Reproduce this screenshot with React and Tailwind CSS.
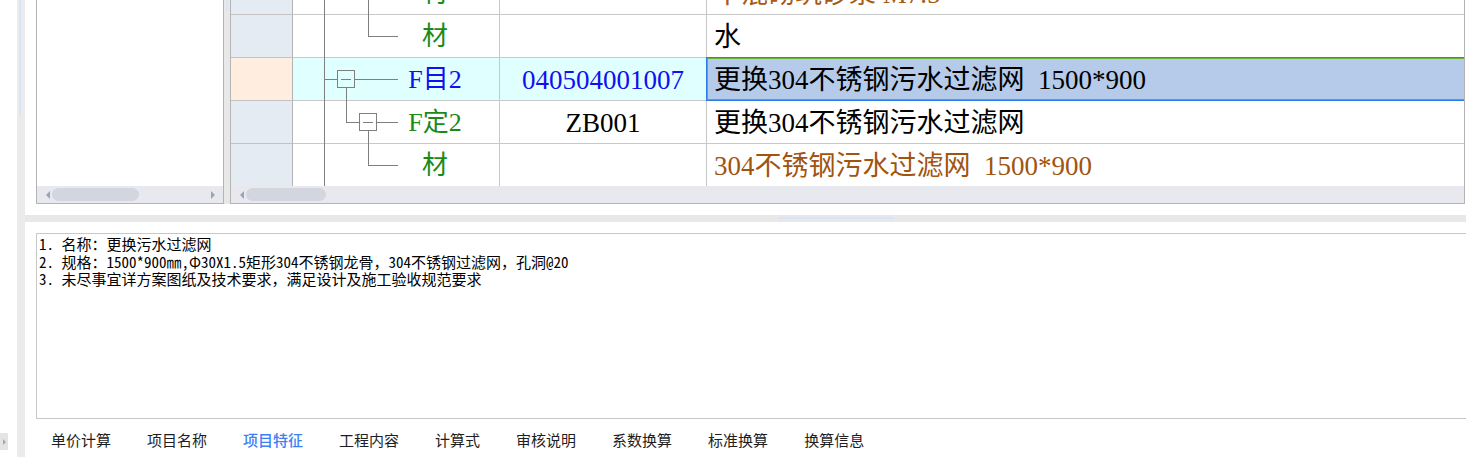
import React from 'react';

const gridFont = { fontFamily: '"Liberation Serif", "Noto Sans CJK SC", serif' };
const uiFont = { fontFamily: '"Noto Sans CJK SC", "Liberation Sans", sans-serif' };
const memoFont = { fontFamily: '"Noto Sans Mono CJK SC", "Noto Sans CJK SC", monospace' };

const rows = [
  { id: 'r0', kind: 'top', tree: '材', treeColor: 'text-[#1a8a1a]', code: '', name: '干混砌筑砂浆 M7.5', nameColor: 'text-[#a65a16]' },
  { id: 'r1', kind: 'leaf1', tree: '材', treeColor: 'text-[#1a8a1a]', code: '', name: '水', nameColor: 'text-black' },
  { id: 'r2', kind: 'mu', tree: 'F目2', treeColor: 'text-[#1010f0]', code: '040504001007', codeColor: 'text-[#1010f0]', name: '更换304不锈钢污水过滤网  1500*900', nameColor: 'text-black', active: true },
  { id: 'r3', kind: 'ding', tree: 'F定2', treeColor: 'text-[#1a8a1a]', code: 'ZB001', codeColor: 'text-black', name: '更换304不锈钢污水过滤网', nameColor: 'text-black' },
  { id: 'r4', kind: 'leaf2', tree: '材', treeColor: 'text-[#1a8a1a]', code: '', name: '304不锈钢污水过滤网  1500*900', nameColor: 'text-[#a0540f]' },
];

const tabs = ['单价计算', '项目名称', '项目特征', '工程内容', '计算式', '审核说明', '系数换算', '标准换算', '换算信息'];

function TreeLines({ kind }) {
  const c = '#7f7f7f';
  return (
    <svg className="absolute left-0 top-0 overflow-visible" width="207" height="43" viewBox="0 0 207 43">
      <g stroke={c} strokeWidth="1" fill="none" shapeRendering="crispEdges">
        <line x1="31.5" y1="0" x2="31.5" y2="43" />
        {kind === 'top' && <line x1="75.5" y1="0" x2="75.5" y2="43" />}
        {(kind === 'leaf1' || kind === 'leaf2') && (
          <>
            <line x1="75.5" y1="0" x2="75.5" y2="21.5" />
            <line x1="75.5" y1="21.5" x2="105" y2="21.5" />
          </>
        )}
        {kind === 'mu' && (
          <>
            <line x1="31.5" y1="21.5" x2="44" y2="21.5" />
            <rect x="44.5" y="12.5" width="17" height="17" />
            <line x1="48" y1="21.5" x2="58" y2="21.5" />
            <line x1="62" y1="21.5" x2="105" y2="21.5" />
            <line x1="53.5" y1="30" x2="53.5" y2="43" />
          </>
        )}
        {kind === 'ding' && (
          <>
            <line x1="53.5" y1="0" x2="53.5" y2="21.5" />
            <line x1="53.5" y1="21.5" x2="66" y2="21.5" />
            <rect x="66.5" y="12.5" width="17" height="17" />
            <line x1="70" y1="21.5" x2="80" y2="21.5" />
            <line x1="84" y1="21.5" x2="105" y2="21.5" />
            <line x1="75.5" y1="30" x2="75.5" y2="43" />
          </>
        )}
      </g>
    </svg>
  );
}

function HScroll({ thumbWidth, rightArrow }) {
  return (
    <div className="h-[17px] bg-[#e8e9ee] flex items-center">
      <div className="ml-[9px] w-0 h-0 border-y-[4px] border-y-transparent border-r-[4px] border-r-[#9ba4b7]" />
      <div className="ml-[2px] h-[13px] rounded-full bg-[#d3d6de]" style={{ width: thumbWidth }} />
      {rightArrow && (
        <div className="ml-auto mr-[8px] w-0 h-0 border-y-[4px] border-y-transparent border-l-[4px] border-l-[#9ba4b7]" />
      )}
    </div>
  );
}

function GridRow({ r }) {
  const cellBg = r.active ? 'bg-[#e0ffff]' : 'bg-white';
  return (
    <div className="flex h-[43px]">
      <div className={`w-[62px] shrink-0 border-r border-b border-r-[#b3b3b3] border-b-[#c3c3c3] ${r.active ? 'bg-[#ffeedf]' : 'bg-[#e4ebf3]'}`} />
      <div className={`relative w-[207px] shrink-0 border-r border-b border-[#c8c8c8] flex items-center pt-[2px] ${cellBg}`}>
        <TreeLines kind={r.kind} />
        <span className={`ml-[105px] w-[74px] text-center text-[26px] leading-none ${r.treeColor}`}>{r.tree}</span>
      </div>
      <div className={`w-[207px] shrink-0 border-r border-b border-[#c8c8c8] flex items-center justify-center pt-[2px] text-[27px] leading-none ${cellBg} ${r.codeColor || ''}`}>
        {r.code}
      </div>
      <div className={`relative flex-1 border-b border-[#c8c8c8] flex items-center pl-[7px] pt-[2px] text-[27px] leading-none whitespace-pre ${r.nameColor} ${r.active ? 'bg-[#b5cbe9]' : 'bg-white'}`}>
        {r.active && (
          <div className="absolute -left-px -top-px -right-[2px] -bottom-px border border-[#2a7ee6]">
            <div className="h-full w-full border border-[#6ab23c]" />
          </div>
        )}
        <span className="relative">{r.name}</span>
      </div>
    </div>
  );
}

export default function App() {
  return (
    <div className="flex h-[457px] w-[1466px] overflow-hidden bg-white" style={uiFont}>
      {/* collapsed side strip */}
      <div className="w-[17px] shrink-0 flex flex-col">
        <div className="mt-auto mb-[7px] w-[8px] h-[17px] bg-[#e4e4e4] flex items-center justify-center">
          <div className="w-0 h-0 border-y-[3px] border-y-transparent border-l-[3px] border-l-[#a8a8a8]" />
        </div>
      </div>
      <div className="w-[8px] shrink-0 bg-[#ebebeb]">
        <div className="ml-[2px] w-[2px] h-[115px] bg-[#d6e5f8]" />
      </div>

      <div className="flex-1 flex flex-col min-w-0">
        {/* upper area */}
        <div className="h-[215px] shrink-0 flex pl-[11px] bg-white">
          <div className="w-[188px] h-[204px] shrink-0 border-x border-b border-[#b4b4b4] bg-white flex flex-col">
            <div className="flex-1" />
            <HScroll thumbWidth="87px" rightArrow />
          </div>
          <div className="w-[6px] h-[204px] shrink-0 bg-[#e8e8e8]">
            <div className="ml-[2px] w-[2px] h-[11px] bg-[#d8e6f8]" />
          </div>
          <div className="w-[1235px] h-[204px] shrink-0 border-x border-b border-[#b4b4b4] flex flex-col" style={gridFont}>
            <div className="h-[186px] overflow-hidden">
              <div className="-mt-[28px]">
                {rows.map((r) => (
                  <GridRow key={r.id} r={r} />
                ))}
              </div>
            </div>
            <HScroll thumbWidth="80px" />
          </div>
        </div>

        {/* splitter */}
        <div className="h-[7px] shrink-0 bg-[#e8e8e8]">
          <div className="ml-[753px] mt-[2px] w-[116px] h-[2px] bg-[#d6e5f8]" />
        </div>

        {/* lower area */}
        <div className="flex-1 bg-white rounded-tl-[3px] pl-[11px] pt-[11px] flex flex-col">
          <div className="w-[1440px] h-[186px] shrink-0 border-y border-l border-[#c8c8c8] pl-[2px] pt-[1px] text-[15px] leading-[17.5px] text-black" style={memoFont}>
            <div className="whitespace-pre">1. 名称：更换污水过滤网</div>
            <div className="whitespace-pre">2. 规格：1500*900㎜,Φ30X1.5矩形304不锈钢龙骨，304不锈钢过滤网，孔洞@20</div>
            <div className="whitespace-pre">3. 未尽事宜详方案图纸及技术要求，满足设计及施工验收规范要求</div>
          </div>
          <div className="h-[39px] flex items-center pt-[4px] pl-[15px] gap-[36px] text-[15px]">
            {tabs.map((t) => (
              <span key={t} className={t === '项目特征' ? 'text-[#3d7ff4] font-medium' : 'text-[#1e1e1e]'}>
                {t}
              </span>
            ))}
          </div>
        </div>
      </div>
    </div>
  );
}
